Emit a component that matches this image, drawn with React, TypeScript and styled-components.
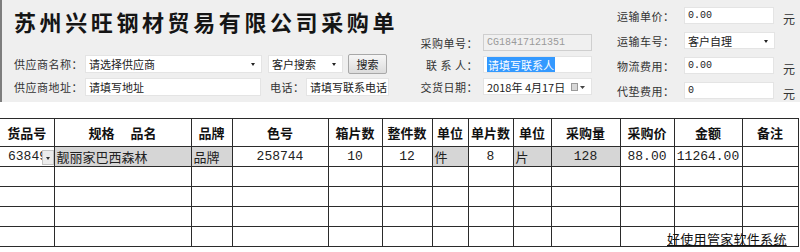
import styled, { createGlobalStyle } from "styled-components";

const GlobalStyle = createGlobalStyle`
  body {
    margin: 0;
    background: #fff;
    font-family: "Noto Sans CJK SC", "Noto Sans", sans-serif;
  }
`;

const Page = styled.div`
  position: relative;
  width: 800px;
  height: 252px;
  overflow: hidden;
  background: #fff;
`;

const Header = styled.div`
  display: flex;
  height: 102px;
  padding-left: 12px;
  background: #efefef;
  border-left: 2px solid #7d7d7d;
  box-sizing: border-box;
`;

const LeftCol = styled.div`
  width: 399px;
  padding-top: 7px;
  display: flex;
  flex-direction: column;
`;

const MidCol = styled.div`
  width: 179px;
  padding-top: 34px;
  display: flex;
  flex-direction: column;
  gap: 5px;
`;

const RightCol = styled.div`
  margin-left: 25px;
  padding-top: 7px;
  display: flex;
  flex-direction: column;
  gap: 8px;
`;

const Title = styled.h1`
  margin: 0;
  height: 48px;
  font-size: 22px;
  line-height: 28px;
  font-weight: 700;
  letter-spacing: 3.6px;
  color: #151515;
  white-space: nowrap;
`;

const Rows = styled.div`
  display: flex;
  flex-direction: column;
  gap: 5px;
`;

const Row = styled.div`
  display: flex;
  align-items: center;
  height: 18px;
`;

const SmallRow = styled(Row)`
  height: 17px;
`;

const Label = styled.span<{ $w: number; $right?: boolean; $ml?: number }>`
  width: ${(p) => p.$w}px;
  margin-left: ${(p) => p.$ml ?? 0}px;
  flex: none;
  font-size: 11px;
  letter-spacing: 0.5px;
  color: #333;
  text-align: ${(p) => (p.$right ? "right" : "left")};
  white-space: nowrap;
`;

const Field = styled.div<{ $w: number; $ml?: number; $mono?: boolean; $disabled?: boolean }>`
  position: relative;
  width: ${(p) => p.$w}px;
  height: 100%;
  margin-left: ${(p) => p.$ml ?? 0}px;
  flex: none;
  box-sizing: border-box;
  display: flex;
  align-items: center;
  padding-left: 3px;
  background: ${(p) => (p.$disabled ? "#f0f0f0" : "#fff")};
  border: 1px solid ${(p) => (p.$disabled ? "#cfcfcf" : "#e4e4e4")};
  font-family: ${(p) => (p.$mono ? `"Liberation Mono", monospace` : `"Noto Sans CJK SC", sans-serif`)};
  font-size: ${(p) => (p.$mono ? "10px" : "11px")};
  color: ${(p) => (p.$disabled ? "#9a9a9a" : "#222")};
  white-space: nowrap;
  overflow: hidden;
`;

const Arrow = styled.span`
  position: absolute;
  right: 6px;
  top: 50%;
  margin-top: -1px;
  width: 0;
  height: 0;
  border-left: 2.5px solid transparent;
  border-right: 2.5px solid transparent;
  border-top: 3px solid #222;
`;

const Selected = styled.span`
  background: #3399ff;
  color: #fff;
  padding: 0 1px;
`;

const CalIcon = styled.span`
  position: absolute;
  right: 6px;
  top: 4px;
  display: flex;
  align-items: center;
  gap: 2px;
`;

const CalBox = styled.span`
  width: 7px;
  height: 8px;
  background: #d8d8d8;
  border: 1px solid #9a9a9a;
  box-sizing: border-box;
`;

const Button = styled.button`
  width: 39px;
  height: 20px;
  margin-left: 5px;
  padding: 0;
  font-family: "Noto Sans CJK SC", sans-serif;
  font-size: 11px;
  color: #222;
  background: linear-gradient(#f6f6f6, #dcdcdc);
  border: 1px solid #a8a8a8;
  border-radius: 2px;
`;

const Unit = styled.span`
  margin-left: 9px;
  margin-top: 6px;
  font-size: 12px;
  color: #333;
`;

const Table = styled.table`
  margin-top: 16px;
  width: 798px;
  border-collapse: collapse;
  table-layout: fixed;
  font-family: "Noto Sans CJK SC", sans-serif;
`;

const Th = styled.th`
  height: 27px;
  padding: 0;
  border: 1px solid #2b2b2b;
  font-size: 13px;
  font-weight: 700;
  color: #111;
  white-space: pre;
  &:first-child {
    border-left: none;
  }
`;

const Td = styled.td<{ $gray?: boolean; $align?: string; $mono?: boolean }>`
  position: relative;
  height: 19px;
  padding: 0 2px;
  border: 1px solid #2b2b2b;
  background: ${(p) => (p.$gray ? "#d6d6d6" : "#fff")};
  text-align: ${(p) => p.$align ?? "center"};
  font-family: ${(p) => (p.$mono ? `"Liberation Mono", monospace` : `"Noto Sans CJK SC", sans-serif`)};
  font-size: 13px;
  color: #222;
  white-space: nowrap;
  overflow: hidden;
  &:first-child {
    border-left: none;
  }
`;

const CodeText = styled.span`
  display: block;
  padding-left: 8px;
  overflow: hidden;
`;

const DropBtn = styled.span`
  position: absolute;
  right: 0;
  top: 3px;
  width: 12px;
  height: 15px;
  background: #ececec;
  border: 1px solid #c4c4c4;
  box-sizing: border-box;
  &::after {
    content: "";
    position: absolute;
    left: 3px;
    top: 6px;
    border-left: 2.5px solid transparent;
    border-right: 2.5px solid transparent;
    border-top: 3px solid #333;
  }
`;

const Watermark = styled.div`
  position: absolute;
  left: 667px;
  top: 230px;
  font-family: "Noto Sans CJK SC", sans-serif;
  font-size: 13px;
  line-height: 17px;
  letter-spacing: 0.3px;
  color: #111;
  text-decoration: underline;
  white-space: nowrap;
`;

const widths = [54, 137, 41, 96, 54, 50, 36, 45, 38, 69, 54, 68, 56];
const heads = ["货品号", "规格\u3000 品名", "品牌", "色号", "箱片数", "整件数", "单位", "单片数", "单位", "采购量", "采购价", "金额", "备注"];

export default function App() {
  return (
    <Page>
      <GlobalStyle />
      <Header>
        <LeftCol>
          <Title>苏州兴旺钢材贸易有限公司采购单</Title>
          <Rows>
            <Row>
              <Label $w={71}>供应商名称：</Label>
              <Field $w={177}>
                请选择供应商
                <Arrow />
              </Field>
              <Field $w={75} $ml={6}>
                客户搜索
                <Arrow />
              </Field>
              <Button>搜索</Button>
            </Row>
            <Row>
              <Label $w={71}>供应商地址：</Label>
              <Field $w={176}>请填写地址</Field>
              <Label $w={36} $ml={9}>电话：</Label>
              <Field $w={83}>请填写联系电话</Field>
            </Row>
          </Rows>
        </LeftCol>
        <MidCol>
          <SmallRow>
            <Label $w={65} $right>采购单号：</Label>
            <Field $w={109} $ml={5} $mono $disabled>CG18417121351</Field>
          </SmallRow>
          <SmallRow>
            <Label $w={65} $right>联 系 人：</Label>
            <Field $w={109} $ml={5}>
              <Selected>请填写联系人</Selected>
            </Field>
          </SmallRow>
          <SmallRow>
            <Label $w={65} $right>交货日期：</Label>
            <Field $w={109} $ml={5}>
              2018年 4月17日
              <CalIcon>
                <CalBox />
                <svg width="5" height="3" viewBox="0 0 5 3">
                  <path d="M0 0h5L2.5 3z" fill="#444" />
                </svg>
              </CalIcon>
            </Field>
          </SmallRow>
        </MidCol>
        <RightCol>
          <SmallRow>
            <Label $w={62}>运输单价：</Label>
            <Field $w={90} $ml={5} $mono>0.00</Field>
            <Unit>元</Unit>
          </SmallRow>
          <SmallRow>
            <Label $w={62}>运输车号：</Label>
            <Field $w={91} $ml={5}>
              客户自理
              <Arrow />
            </Field>
          </SmallRow>
          <SmallRow>
            <Label $w={62}>物流费用：</Label>
            <Field $w={90} $ml={5} $mono>0.00</Field>
            <Unit>元</Unit>
          </SmallRow>
          <SmallRow>
            <Label $w={62}>代垫费用：</Label>
            <Field $w={90} $ml={5} $mono>0</Field>
            <Unit>元</Unit>
          </SmallRow>
        </RightCol>
      </Header>
      <Table>
        <colgroup>
          {widths.map((w, i) => (
            <col key={i} style={{ width: w }} />
          ))}
        </colgroup>
        <thead>
          <tr>
            {heads.map((h, i) => (
              <Th key={i}>{h}</Th>
            ))}
          </tr>
        </thead>
        <tbody>
          <tr>
            <Td $align="left" $mono style={{ padding: 0 }}>
              <CodeText>63849</CodeText>
              <DropBtn />
            </Td>
            <Td $gray $align="left">靓丽家巴西森林</Td>
            <Td $gray $align="left">品牌</Td>
            <Td $mono>258744</Td>
            <Td $mono>10</Td>
            <Td $mono>12</Td>
            <Td $gray $align="left">件</Td>
            <Td $mono>8</Td>
            <Td $gray $align="left">片</Td>
            <Td $gray $mono>128</Td>
            <Td $mono>88.00</Td>
            <Td $mono>11264.00</Td>
            <Td />
          </tr>
          {[0, 1, 2, 3].map((r) => (
            <tr key={r}>
              {widths.map((_, i) => (
                <Td key={i} />
              ))}
            </tr>
          ))}
        </tbody>
      </Table>
      <Watermark>好使用管家软件系统</Watermark>
    </Page>
  );
}
